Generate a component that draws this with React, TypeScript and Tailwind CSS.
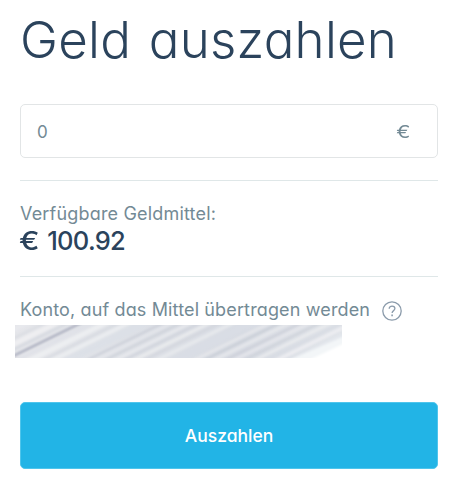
import { useState } from 'react';

const FONT = "font-['Inter','Liberation_Sans',sans-serif] [font-feature-settings:'cv11'_1]";

// x: where the streak meets the bottom edge, w: thickness
const STREAKS = [
  { x: -60, w: 5, color: '#e9eaee' },
  { x: -42, w: 3, color: '#dbdde3' },
  { x: -30, w: 5, color: '#f0f0f2' },
  { x: -19, w: 3, color: '#d6d9e1' },
  { x: -6, w: 2.5, color: '#a4a8ba' },
  { x: 6, w: 3, color: '#dfe2e9' },
  { x: 19, w: 5, color: '#eff0f2' },
  { x: 32, w: 2, color: '#d6d9e1' },
  { x: 42, w: 4, color: '#eceef1' },
  { x: 57, w: 7, color: '#dce0e7' },
  { x: 76, w: 2, color: '#c9cdd6' },
  { x: 85, w: 2, color: '#e6e8ec' },
  { x: 94, w: 2, color: '#cdd0d8' },
  { x: 104, w: 2.5, color: '#eaebee' },
  { x: 113, w: 2, color: '#cfd2da' },
  { x: 123, w: 3, color: '#ecedef' },
  { x: 133, w: 2, color: '#d2d5dc' },
  { x: 146, w: 4, color: '#e8eaed' },
  { x: 164, w: 8, color: '#d9dde5' },
  { x: 183, w: 3, color: '#e6e7eb' },
  { x: 193, w: 2, color: '#c7cbd4' },
  { x: 203, w: 3, color: '#e7e9ec' },
  { x: 214, w: 2, color: '#cbced7' },
  { x: 223, w: 2.5, color: '#e7e8ec' },
  { x: 233, w: 2, color: '#cdd0d8' },
  { x: 244, w: 3, color: '#ebecef' },
  { x: 255, w: 3, color: '#d8dce4' },
  { x: 266, w: 4, color: '#eeeff2' },
  { x: 280, w: 4, color: '#e4e8ed' },
];

function RedactedAccount() {
  return (
    <svg className="-ml-[5px] block h-[33px] w-[327px]" viewBox="0 0 327 33" aria-hidden="true">
      <defs>
        <linearGradient id="base" x1="0" x2="1" y1="0" y2="0">
          <stop offset="0" stopColor="#e5e6ea" />
          <stop offset="0.35" stopColor="#dde0e6" />
          <stop offset="0.7" stopColor="#d7dbe3" />
          <stop offset="1" stopColor="#dfe3e8" />
        </linearGradient>
        <filter id="soft" x="-5%" y="-20%" width="110%" height="140%">
          <feGaussianBlur stdDeviation="0.9" />
        </filter>
      </defs>
      <rect width="327" height="33" fill="url(#base)" />
      <g filter="url(#soft)">
        {STREAKS.map((s) => (
          <path key={s.x} d={`M${s.x - 8} 37 L${s.x + 76} -4`} stroke={s.color} strokeWidth={s.w} strokeOpacity="0.85" />
        ))}
        <path d="M272 36 L332 10 V38 H272 Z" fill="#f3f6f8" />
        <path d="M292 36 L332 17 V38 H292 Z" fill="#ffffff" />
      </g>
    </svg>
  );
}

export default function App() {
  const [amount, setAmount] = useState('');

  return (
    <main className={`h-[478px] w-[449px] overflow-hidden bg-white pl-5 pr-[11px] pt-[9px] text-[#738a95] ${FONT}`}>
      <h1 className="h-[95px] whitespace-nowrap text-[51px] font-light leading-[62px] tracking-[0.25px] text-[#2b435c] [word-spacing:3px]">
        Geld auszahlen
      </h1>

      <div className="flex h-[54px] items-center rounded-[5px] border border-[#e2e5e6] pl-4 pr-[27px] pt-1 text-[17px]">
        <input
          className="min-w-0 flex-1 bg-transparent placeholder-[#738a95] outline-none"
          placeholder="0"
          value={amount}
          onChange={(e) => setAmount(e.target.value)}
        />
        <span className="origin-right scale-x-125">€</span>
      </div>

      <section className="mt-[22px] h-24 border-t border-[#dfe7e8] pt-[21px]">
        <p className="whitespace-nowrap text-[18px] leading-6 tracking-[0.18px]">Verfügbare Geldmittel:</p>
        <p className="flex whitespace-nowrap text-[25.5px] font-medium leading-[30px] text-[#2b435c]">
          <span className="-ml-px mr-[11px] origin-left scale-x-120">€</span>
          <span className="tracking-[-0.7px]">100.92</span>
        </p>
      </section>

      <section className="h-[126px] border-t border-[#dfe7e8] pt-[21px]">
        <div className="flex h-[27px] items-start">
          <span className="w-[362px] whitespace-nowrap text-[18px] leading-6 tracking-[0.14px]">
            Konto, auf das Mittel übertragen werden
          </span>
          <svg className="mt-[3px] h-5 w-5 shrink-0" viewBox="0 0 20 20" fill="none" stroke="#8b9bab" strokeWidth="1.3">
            <circle cx="10" cy="10" r="9.2" />
            <path d="M7.2 7.8 C7.2 4.2 12.9 4.4 12.9 7.6 C12.9 9.7 10.1 9.6 10.1 12" />
            <path d="M10.1 13.4 V15.2" strokeWidth="1.6" />
          </svg>
        </div>
        <RedactedAccount />
      </section>

      <button className="flex h-[67px] w-full items-center justify-center rounded-[5px] border border-[#4fc5ec] bg-[#22b4e6] pt-0.5 text-[17.5px] font-medium text-white">
        Auszahlen
      </button>
    </main>
  );
}
